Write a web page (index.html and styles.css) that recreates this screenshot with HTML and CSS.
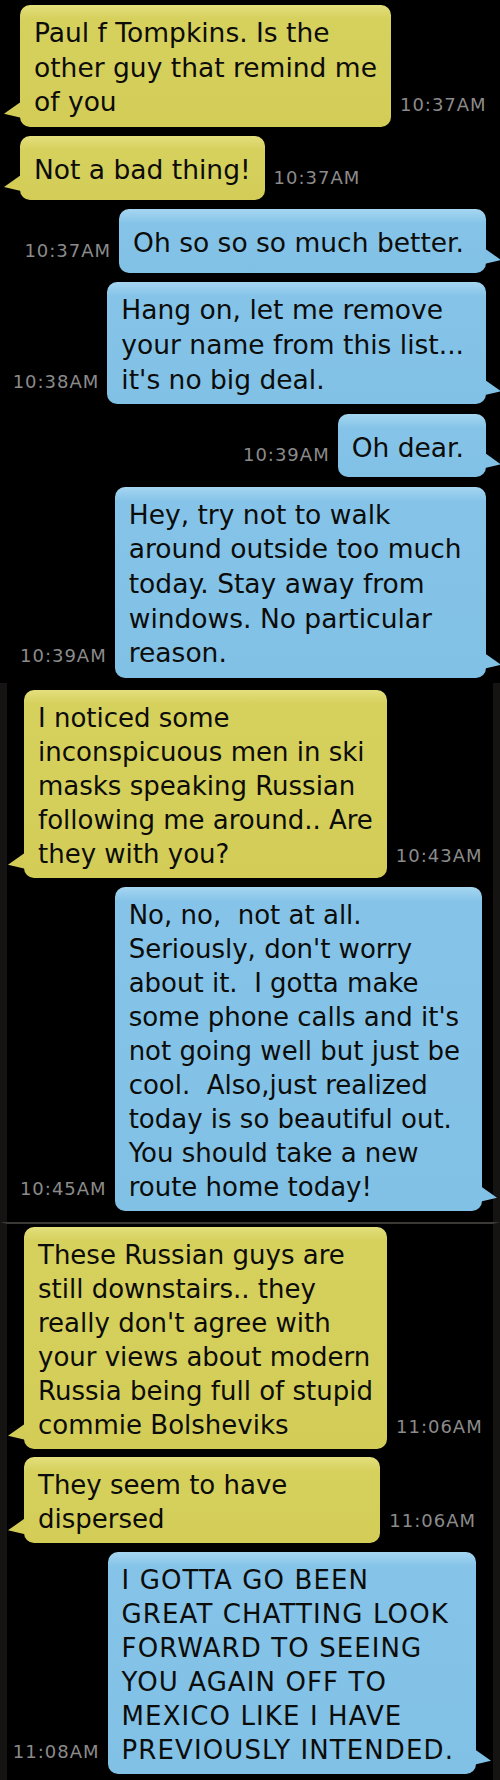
FILE: index.html
```html
<!DOCTYPE html>
<html lang="en">
<head>
    <meta charset="UTF-8">
    <meta name="viewport" content="width=device-width, initial-scale=1.0">
    <title>Messages</title>
    <link rel="stylesheet" href="styles.css">
</head>
<body>
    <!-- first screenshot -->
    <div class="chat sec1">
        <div class="row in">
            <p class="bubble wide">Paul f Tompkins. Is the<br>other guy that remind me<br>of you</p>
            <span class="time">10:37AM</span>
        </div>
        <div class="row in">
            <p class="bubble single">Not a bad thing!</p>
            <span class="time">10:37AM</span>
        </div>
        <div class="row out">
            <span class="time">10:37AM</span>
            <p class="bubble single">Oh so so so much better.</p>
        </div>
        <div class="row out">
            <span class="time">10:38AM</span>
            <p class="bubble wide">Hang on, let me remove<br>your name from this list...<br>it's no big deal.</p>
        </div>
        <div class="row out">
            <span class="time">10:39AM</span>
            <p class="bubble single">Oh dear.</p>
        </div>
        <div class="row out">
            <span class="time">10:39AM</span>
            <p class="bubble wide">Hey, try not to walk<br>around outside too much<br>today. Stay away from<br>windows. No particular<br>reason.</p>
        </div>
    </div>

    <!-- second screenshot -->
    <div class="chat sec2">
        <div class="row in">
            <p class="bubble wide">I noticed some<br>inconspicuous men in ski<br>masks speaking Russian<br>following me around.. Are<br>they with you?</p>
            <span class="time">10:43AM</span>
        </div>
        <div class="row out">
            <span class="time">10:45AM</span>
            <p class="bubble wide">No, no,&nbsp; not at all.<br>Seriously, don't worry<br>about it.&nbsp; I gotta make<br>some phone calls and it's<br>not going well but just be<br>cool.&nbsp; Also,just realized<br>today is so beautiful out.<br>You should take a new<br>route home today!</p>
        </div>
    </div>

    <!-- third screenshot -->
    <div class="chat sec3">
        <div class="row in">
            <p class="bubble wide">These Russian guys are<br>still downstairs.. they<br>really don't agree with<br>your views about modern<br>Russia being full of stupid<br>commie Bolsheviks</p>
            <span class="time">11:06AM</span>
        </div>
        <div class="row in">
            <p class="bubble wide">They seem to have<br>dispersed</p>
            <span class="time">11:06AM</span>
        </div>
        <div class="row out">
            <span class="time">11:08AM</span>
            <p class="bubble wide caps">I GOTTA GO BEEN<br>GREAT CHATTING LOOK<br>FORWARD TO SEEING<br>YOU AGAIN OFF TO<br>MEXICO LIKE I HAVE<br>PREVIOUSLY INTENDED.</p>
        </div>
    </div>
</body>
</html>
```

FILE: styles.css
```css
* { box-sizing: border-box; }
body {
    margin: 0; width: 500px;
    background: #000;
    font-family: "DejaVu Sans", "Liberation Sans", sans-serif;
}

/* each screenshot */
.chat { display: flex; flex-direction: column; }
.sec1 { padding: 5px 14px 5px 20px; gap: 9.5px; font-size: 26.5px; line-height: 34.6px; }
.sec2 {
    padding: 7px 11px 11px 17px; gap: 9px; font-size: 26px; line-height: 34px;
    border-left: 7px solid #151413; border-right: 7px solid #151413;
}
.sec3 {
    padding: 3px 17px 6px 17px; gap: 8.5px; font-size: 26px; line-height: 34px;
    border-left: 7px solid #151413; border-right: 7px solid #151413;
    border-top: 2px solid #3a3936;
}

.row { display: flex; align-items: flex-end; }
.row.out { justify-content: flex-end; }

/* message bubble */
.bubble {
    position: relative; margin: 0;
    padding: 11px 14px 7px 14px;
    border-radius: 10px;
    color: #0c0c0a; white-space: nowrap;
}
.bubble.single { padding-top: 17px; padding-bottom: 12px; }
.in .bubble { background: linear-gradient(#e3df7c, #d6d05d 14px, #d3cd58); }
.out .bubble { background: linear-gradient(#a6d6f1, #85c4e8 14px, #81c1e5); padding-right: 22px; }
.sec1 .wide { width: 382px; }
.sec2 .wide { width: 375px; }
.sec3 .wide { width: 370px; }
.caps { letter-spacing: 1.1px; }

/* tails */
.bubble::after {
    content: ""; position: absolute;
    bottom: 9px; width: 17px; height: 16px;
}
.in .bubble::after {
    left: -16px; background: #d3cd58;
    clip-path: polygon(100% 0, 0 75%, 100% 100%);
}
.out .bubble::after {
    right: -15px; background: #81c1e5;
    clip-path: polygon(0 0, 100% 75%, 0 100%);
}

/* timestamps */
.time {
    font-size: 18px; line-height: 18px; letter-spacing: 1px;
    color: #8b8b8b; margin-bottom: 13px;
}
.in .time { margin-left: 9px; }
.out .time { margin-right: 8px; }
```
